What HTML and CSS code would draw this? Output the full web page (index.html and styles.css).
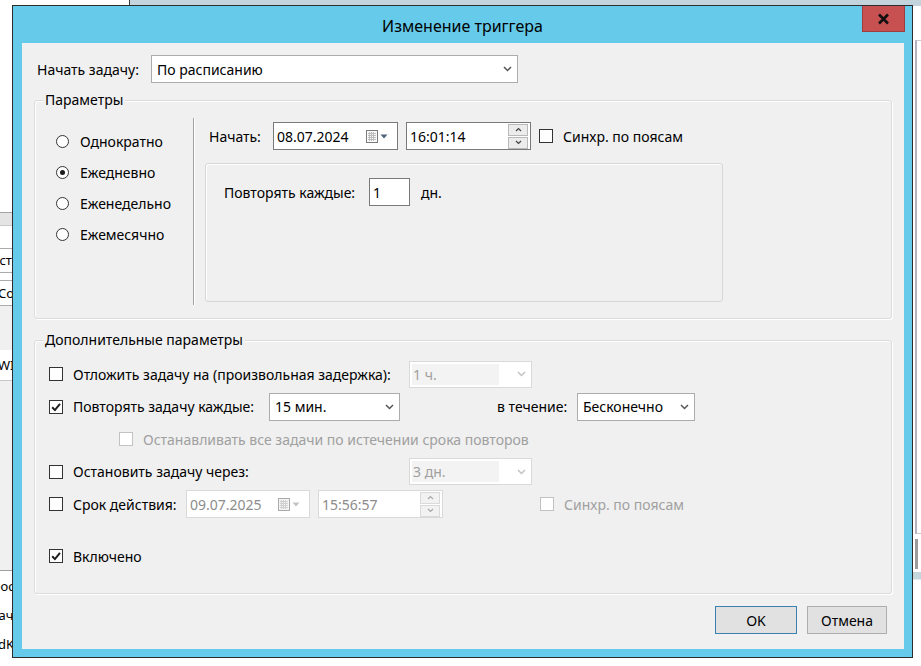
FILE: index.html
```html
<!DOCTYPE html>
<html lang="ru">
<head>
    <meta charset="UTF-8">
    <meta name="viewport" content="width=device-width, initial-scale=1.0">
    <title>Изменение триггера</title>
    <link rel="stylesheet" href="styles.css">
</head>
<body>

<div class="desktop">
    <!-- windows behind the dialog -->
    <div class="back-top"></div>

    <div class="back-left">
        <div class="bl-head"></div>
        <div class="bl-white"></div>
        <div class="bl-field"><span class="t-props">Свойство</span></div>
        <div class="bl-gap"></div>
        <div class="bl-field"><span class="t-word">Comp</span></div>
        <div class="bl-gray"></div>
        <div class="bl-row"><span class="t-word">WIN</span></div>
        <div class="bl-gray bl-gray-big"></div>
        <div class="bl-list">
            <div><span class="t-query">Запрос</span></div>
            <div><span class="t-task">Задача</span></div>
            <div><span class="t-word">dK</span></div>
        </div>
    </div>

    <div class="back-right">
        <div class="br-frame"></div>
        <div class="br-block"></div>
        <div class="br-band"></div>
    </div>

    <!-- the dialog -->
    <div class="dialog">
        <div class="titlebar">
            <span class="title">Изменение триггера</span>
            <div class="close-btn">
                <svg width="13" height="12" viewBox="0 0 13 12"><path d="M2 1.5l9 9M11 1.5l-9 9" stroke="#111" stroke-width="2.6" fill="none"/></svg>
            </div>
        </div>

        <div class="client">
            <div class="start-row">
                <span class="caption">Начать задачу:</span>
                <div class="combo combo-main">
                    <span>По расписанию</span>
                    <svg width="9" height="6" viewBox="0 0 9 6"><path d="M1 1l3.5 3.5L8 1" fill="none" stroke="#555" stroke-width="1.5"/></svg>
                </div>
            </div>

            <!-- Параметры -->
            <div class="group params">
                <span class="group-title">Параметры</span>

                <div class="kinds">
                    <div class="kind"><span class="radio"></span>Однократно</div>
                    <div class="kind"><span class="radio on"></span>Ежедневно</div>
                    <div class="kind"><span class="radio"></span>Еженедельно</div>
                    <div class="kind"><span class="radio"></span>Ежемесячно</div>
                </div>

                <div class="split"></div>

                <div class="start-col">
                    <div class="when">
                        <span class="caption when-caption">Начать:</span>
                        <div class="field date">
                            <span>08.07.2024</span>
                            <svg width="24" height="13" viewBox="0 0 24 13">
                                <rect x="0.5" y="0.5" width="11" height="12" fill="#fafafa" stroke="#7b7b7b"/>
                                <path d="M2 3.5h8M2 5.5h8M2 7.5h8M2 9.5h8M3.5 2v9M5.5 2v9M7.5 2v9" stroke="#bdbdbd"/>
                                <path d="M14.5 4.5h7l-3.5 4z" fill="#4f6479"/>
                            </svg>
                        </div>
                        <div class="field time">
                            <span>16:01:14</span>
                            <div class="spin">
                                <span class="spin-btn"><svg width="7" height="5" viewBox="0 0 7 5"><path d="M1 4l2.5-2.5L6 4" fill="none" stroke="#444" stroke-width="1.2"/></svg></span>
                                <span class="spin-btn"><svg width="7" height="5" viewBox="0 0 7 5"><path d="M1 1l2.5 2.5L6 1" fill="none" stroke="#444" stroke-width="1.2"/></svg></span>
                            </div>
                        </div>
                        <span class="check sync"></span>
                        <span class="check-label">Синхр. по поясам</span>
                    </div>

                    <div class="panel">
                        <div class="panel-row">
                            <span class="caption every-caption">Повторять каждые:</span>
                            <div class="field days">1</div>
                            <span class="unit">дн.</span>
                        </div>
                    </div>
                </div>
            </div>

            <!-- Дополнительные параметры -->
            <div class="group extra">
                <span class="group-title">Дополнительные параметры</span>

                <div class="opt-row">
                    <div class="opt opt-wide"><span class="check"></span>Отложить задачу на (произвольная задержка):</div>
                    <div class="combo combo-off combo-short">
                        <span class="val">1 ч.</span>
                        <svg width="9" height="6" viewBox="0 0 9 6"><path d="M1 1l3.5 3.5L8 1" fill="none" stroke="#c2c2c2" stroke-width="1.5"/></svg>
                    </div>
                </div>

                <div class="opt-row">
                    <div class="opt opt-repeat">
                        <span class="check"><svg width="12" height="12" viewBox="0 0 12 12"><path d="M2.2 6.3l2.7 2.8L10 2.8" fill="none" stroke="#1e1e1e" stroke-width="2"/></svg></span>
                        Повторять задачу каждые:
                    </div>
                    <div class="combo combo-min">
                        <span>15 мин.</span>
                        <svg width="9" height="6" viewBox="0 0 9 6"><path d="M1 1l3.5 3.5L8 1" fill="none" stroke="#555" stroke-width="1.5"/></svg>
                    </div>
                    <span class="during">в течение:</span>
                    <div class="combo combo-inf">
                        <span>Бесконечно</span>
                        <svg width="9" height="6" viewBox="0 0 9 6"><path d="M1 1l3.5 3.5L8 1" fill="none" stroke="#555" stroke-width="1.5"/></svg>
                    </div>
                </div>

                <div class="opt-row">
                    <div class="opt opt-sub muted"><span class="check check-off"></span>Останавливать все задачи по истечении срока повторов</div>
                </div>

                <div class="opt-row">
                    <div class="opt opt-wide"><span class="check"></span>Остановить задачу через:</div>
                    <div class="combo combo-off combo-short">
                        <span class="val">3 дн.</span>
                        <svg width="9" height="6" viewBox="0 0 9 6"><path d="M1 1l3.5 3.5L8 1" fill="none" stroke="#c2c2c2" stroke-width="1.5"/></svg>
                    </div>
                </div>

                <div class="opt-row">
                    <div class="opt opt-expire"><span class="check"></span>Срок действия:</div>
                    <div class="field field-off date date-off">
                        <span>09.07.2025</span>
                        <svg width="24" height="13" viewBox="0 0 24 13">
                            <rect x="0.5" y="0.5" width="11" height="12" fill="#f4f4f4" stroke="#a9a9a9"/>
                            <path d="M2 3.5h8M2 5.5h8M2 7.5h8M2 9.5h8M3.5 2v9M5.5 2v9M7.5 2v9" stroke="#d0d0d0"/>
                            <path d="M14.5 4.5h7l-3.5 4z" fill="#c4c4c4"/>
                        </svg>
                    </div>
                    <div class="field field-off time">
                        <span>15:56:57</span>
                        <div class="spin spin-off">
                            <span class="spin-btn"><svg width="7" height="5" viewBox="0 0 7 5"><path d="M1 4l2.5-2.5L6 4" fill="none" stroke="#a8a8a8" stroke-width="1.2"/></svg></span>
                            <span class="spin-btn"><svg width="7" height="5" viewBox="0 0 7 5"><path d="M1 1l2.5 2.5L6 1" fill="none" stroke="#a8a8a8" stroke-width="1.2"/></svg></span>
                        </div>
                    </div>
                    <span class="check check-off sync-off"></span>
                    <span class="check-label muted">Синхр. по поясам</span>
                </div>

                <div class="opt-row enabled-row">
                    <div class="opt">
                        <span class="check"><svg width="12" height="12" viewBox="0 0 12 12"><path d="M2.2 6.3l2.7 2.8L10 2.8" fill="none" stroke="#1e1e1e" stroke-width="2"/></svg></span>
                        Включено
                    </div>
                </div>
            </div>

            <div class="buttons">
                <button class="btn btn-default">OK</button>
                <button class="btn">Отмена</button>
            </div>
        </div>
    </div>
</div>

</body>
</html>
```

FILE: styles.css
```css
* {
    margin: 0;
    padding: 0;
    box-sizing: border-box;
}
body {
    width: 921px;
    height: 666px;
    overflow: hidden;
    background-color: #fff;
    font-family: "Noto Sans", "Open Sans", sans-serif;
    font-size: 14px;
    color: #000;
}
.desktop {
    position: relative;
    width: 921px;
    height: 666px;
}

/* background windows */
.back-top {
    position: absolute;
    left: 129px;
    top: 0;
    width: 792px;
    height: 6px;
    background-color: #c3d4dc;
    border-left: 1px solid #3a3a3a;
}
.back-left {
    position: absolute;
    left: -30px;
    top: 212px;
    width: 140px;
    height: 446px;
    overflow: hidden;
    display: flex;
    flex-direction: column;
    font-size: 13px;
    white-space: nowrap;
}
.bl-head {
    height: 14px;
    background-color: #e4e4e4;
    border-top: 1px solid #a3a3a3;
    border-bottom: 1px solid #c9c9c9;
}
.bl-white {
    height: 23px;
}
.bl-field {
    height: 26px;
    border-top: 1px solid #ababab;
    border-bottom: 1px solid #ababab;
    display: flex;
    align-items: center;
}
.t-props {
    margin-left: -2px;
}
.t-word {
    margin-left: 28px;
}
.t-query {
    margin-left: 0;
}
.t-task {
    margin-left: 6px;
}
.bl-gap {
    height: 8px;
}
.bl-gray {
    height: 46px;
    background-color: #f0f0f0;
}
.bl-gray-big {
    height: 199px;
    border-top: 1px solid #c6c6c6;
    border-bottom: 1px solid #a0a0a0;
}
.bl-row {
    height: 31px;
    display: flex;
    align-items: center;
}
.bl-list div {
    height: 29px;
    display: flex;
    align-items: center;
}
.back-right {
    position: absolute;
    left: 913px;
    top: 0;
    width: 8px;
    height: 666px;
    display: flex;
    flex-direction: column;
}
.br-frame {
    margin-top: 40px;
    margin-left: 2px;
    height: 494px;
    border-left: 2px solid #b2b2c0;
    border-top: 1px solid #c8c8d0;
    border-bottom: 1px solid #c8c8d0;
}
.br-block {
    margin-top: 5px;
    margin-left: 2px;
    width: 3px;
    height: 30px;
    background-color: #9c9c9c;
}
.br-band {
    margin-top: 3px;
    height: 8px;
    background-color: #c6d6dd;
    border-bottom: 1px solid #e3eaee;
}

/* dialog frame */
.dialog {
    position: absolute;
    left: 12px;
    top: 5px;
    width: 901px;
    height: 653px;
    background-color: #66caea;
    border: 1px solid #2d2d2d;
    display: flex;
    flex-direction: column;
}
.titlebar {
    position: relative;
    height: 37px;
    display: flex;
    align-items: center;
    justify-content: center;
}
.title {
    font-size: 16px;
    padding-top: 3px;
}
.close-btn {
    position: absolute;
    top: 0;
    right: 7px;
    width: 43px;
    height: 26px;
    background-color: #c75050;
    border: 1px solid #9e3e3e;
    border-top: none;
    display: flex;
    align-items: center;
    justify-content: center;
}
.client {
    margin: 0 8px 8px 9px;
    height: 606px;
    background-color: #f0f0f0;
    padding: 12px 12px 0;
    display: flex;
    flex-direction: column;
}

/* common controls */
.caption {
    flex-shrink: 0;
}
.combo {
    display: flex;
    align-items: center;
    justify-content: space-between;
    height: 28px;
    background-color: #fff;
    border: 1px solid #acacac;
    padding: 0 5px 0 5px;
}
.combo-off {
    height: 27px;
    border-color: #d9d9d9;
    color: #a0a0a0;
    padding: 2px 5px 2px 2px;
}
.combo-off .val {
    flex: 1;
    align-self: stretch;
    display: flex;
    align-items: center;
    background-color: #f3f3f3;
    padding-left: 1px;
    margin-right: 18px;
}
.field {
    height: 28px;
    background-color: #fff;
    border: 1px solid #7a7a7a;
    display: flex;
    align-items: center;
    padding-left: 3px;
}
.field-off {
    border-color: #d9d9d9;
    color: #8c8c8c;
}
.check {
    flex-shrink: 0;
    width: 14px;
    height: 14px;
    border: 1px solid #333;
    background-color: #fff;
    display: flex;
    align-items: center;
    justify-content: center;
}
.check-off {
    border-color: #c2c2c2;
}
.check-label {
    margin-left: 10px;
}
.muted {
    color: #a0a0a0;
}
.radio {
    flex-shrink: 0;
    width: 13px;
    height: 13px;
    border: 1px solid #333;
    border-radius: 50%;
    background-color: #fff;
    display: flex;
    align-items: center;
    justify-content: center;
}
.radio.on::after {
    content: "";
    width: 5px;
    height: 5px;
    border-radius: 50%;
    background-color: #1a1a1a;
}
.spin {
    display: flex;
    flex-direction: column;
    gap: 1px;
}
.spin-btn {
    width: 20px;
    height: 12px;
    border: 1px solid #b9b9b9;
    background-color: #ececec;
    display: flex;
    align-items: center;
    justify-content: center;
}
.spin-off .spin-btn {
    border-color: #dadada;
    background-color: #f2f2f2;
}

/* top row */
.start-row {
    display: flex;
    align-items: center;
    height: 28px;
}
.start-row .caption {
    width: 117px;
    padding-left: 3px;
}
.combo-main {
    width: 367px;
}

/* group boxes */
.group {
    position: relative;
    border: 1px solid #dcdcdc;
    border-radius: 3px;
    box-shadow: inset 1px 1px 0 #fff, 1px 1px 0 #fff;
}
.group-title {
    position: absolute;
    top: -11px;
    left: 8px;
    padding: 0 2px;
    line-height: 20px;
    background-color: #f0f0f0;
}
.params {
    margin-top: 17px;
    height: 219px;
    display: flex;
    padding: 17px 0 0 21px;
}
.kinds {
    width: 137px;
    padding-top: 8px;
    display: flex;
    flex-direction: column;
}
.kind {
    height: 31px;
    display: flex;
    align-items: center;
    gap: 11px;
}
.split {
    width: 2px;
    height: 187px;
    border-left: 1px solid #a3a3a3;
    border-right: 1px solid #fff;
}
.start-col {
    margin-left: 10px;
    display: flex;
    flex-direction: column;
}
.when {
    margin-top: 4px;
    height: 28px;
    display: flex;
    align-items: center;
    padding-left: 4px;
}
.when-caption {
    width: 64px;
}
.date {
    width: 125px;
    justify-content: space-between;
    padding-right: 7px;
}
.time {
    width: 125px;
    margin-left: 8px;
    padding-right: 2px;
    justify-content: space-between;
}
.sync {
    margin-left: 8px;
}
.panel {
    margin-top: 13px;
    width: 518px;
    height: 139px;
    border: 1px solid #d7d7d7;
    border-radius: 3px;
    box-shadow: inset 1px 1px 0 #fff;
    padding: 14px 0 0 18px;
}
.panel-row {
    display: flex;
    align-items: center;
    height: 28px;
}
.every-caption {
    width: 145px;
}
.days {
    width: 41px;
}
.unit {
    margin-left: 11px;
}

/* extra options */
.extra {
    margin-top: 21px;
    height: 254px;
    padding: 17px 0 0 14px;
}
.opt-row {
    height: 32.5px;
    display: flex;
    align-items: center;
}
.opt {
    flex-shrink: 0;
    display: flex;
    align-items: center;
    gap: 10px;
}
.opt-wide {
    width: 360px;
}
.opt-repeat {
    width: 220px;
}
.opt-sub {
    padding-left: 70px;
}
.opt-expire {
    width: 137px;
}
.combo-short {
    width: 123px;
}
.combo-min {
    width: 131px;
}
.during {
    margin-left: 97px;
    width: 80px;
}
.combo-inf {
    width: 118px;
}
.date-off {
    width: 124px;
}
.sync-off {
    margin-left: 97px;
}
.enabled-row {
    margin-top: 19.5px;
}

/* buttons */
.buttons {
    margin-top: 12px;
    padding-right: 5px;
    display: flex;
    justify-content: flex-end;
    gap: 10px;
}
.btn {
    width: 80px;
    height: 28px;
    background-color: #e1e1e1;
    border: 1px solid #adadad;
    font-family: inherit;
    font-size: 14px;
    color: #000;
}
.btn-default {
    width: 82px;
    border-color: #3c7fb1;
}
```
